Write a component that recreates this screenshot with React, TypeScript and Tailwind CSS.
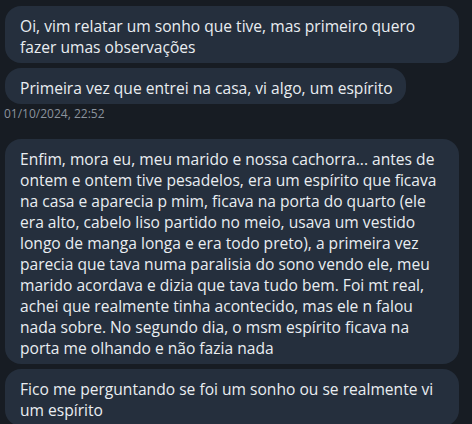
const font = { fontFamily: "'Open Sans', Lato, sans-serif" };

const Bubble = ({ lines, fit }: { lines: string[]; fit?: boolean }) => {
  return (
    <div
      className={`${fit ? "self-start" : "w-[454px]"} rounded-2xl bg-[#252f3d] pl-[15px] pr-[13px] pt-[10px] pb-[5px] text-[15.6px] leading-[21px] text-[#e9edf1]`}
    >
      {lines.map((line) => (
        <div key={line} className="whitespace-nowrap">
          {line}
        </div>
      ))}
    </div>
  );
};

export default function App() {
  return (
    <div
      style={font}
      className="flex h-[424px] w-[472px] flex-col gap-[5px] overflow-hidden bg-[#171c23] pl-[5px] pt-[6px]"
    >
      <Bubble
        lines={[
          "Oi, vim relatar um sonho que tive, mas primeiro quero",
          "fazer umas observações",
        ]}
      />
      <Bubble fit lines={["Primeira vez que entrei na casa, vi algo, um espírito"]} />
      <div className="-mt-[5px] mb-[10px] -ml-[1px] text-[12px] leading-[20px] text-[#8b939d]">
        01/10/2024, 22:52
      </div>
      <Bubble
        lines={[
          "Enfim, mora eu, meu marido e nossa cachorra... antes de",
          "ontem e ontem tive pesadelos, era um espírito que ficava",
          "na casa e aparecia p mim, ficava na porta do quarto (ele",
          "era alto, cabelo liso partido no meio, usava um vestido",
          "longo de manga longa e era todo preto), a primeira vez",
          "parecia que tava numa paralisia do sono vendo ele, meu",
          "marido acordava e dizia que tava tudo bem. Foi mt real,",
          "achei que realmente tinha acontecido, mas ele n falou",
          "nada sobre. No segundo dia, o msm espírito ficava na",
          "porta me olhando e não fazia nada",
        ]}
      />
      <Bubble
        lines={[
          "Fico me perguntando se foi um sonho ou se realmente vi",
          "um espírito",
        ]}
      />
    </div>
  );
}
